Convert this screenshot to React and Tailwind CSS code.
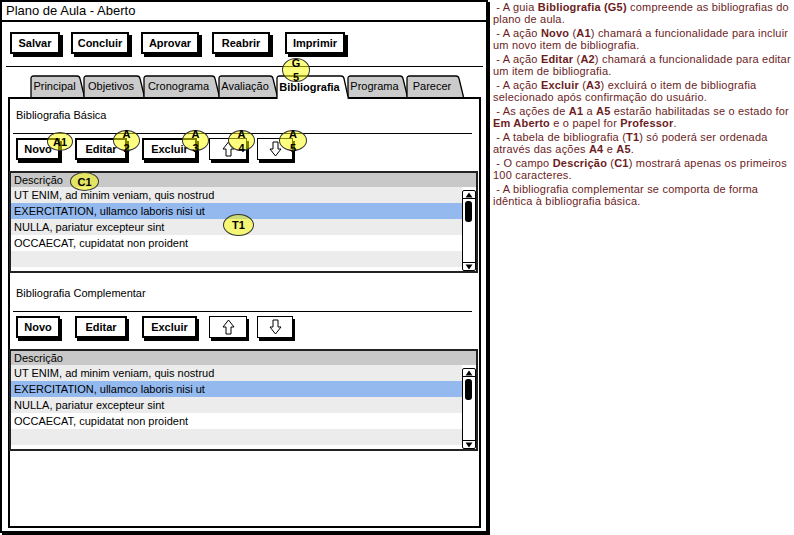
import React from "react"

const rows = [
    "UT ENIM, ad minim veniam, quis nostrud",
    "EXERCITATION, ullamco laboris nisi ut",
    "NULLA, pariatur excepteur sint",
    "OCCAECAT, cupidatat non proident",
    "",
]
const rowBg = ["bg-[#ececec]", "bg-[#93b9ef]", "bg-[#ececec]", "bg-white", "bg-[#ececec]"]

const tabs = [
    { label: "Principal", w: 53 },
    { label: "Objetivos", w: 60 },
    { label: "Cronograma", w: 75 },
    { label: "Avaliação", w: 58 },
    { label: "Bibliografia", w: 71, active: true },
    { label: "Programa", w: 59 },
    { label: "Parecer", w: 56 },
]

const Tab = ({ label, w, active }) => {
    const h = active ? 24 : 22
    const d = `M1,${h} V3.5 Q1,1 3.5,1 H${w - 6} Q${w - 3.5},1 ${w - 3},3.5 L${w + 1.5},${h}`
    return (
        <div className={`relative h-[22px] shrink-0 ${active ? "z-10" : ""}`} style={{ width: w }}>
            <svg className="absolute left-0 top-0 overflow-visible" width={w + 3} height={h}>
                <path d={d} fill={active ? "#fff" : "#cbcbcb"} stroke="#000" strokeWidth="1.3" />
            </svg>
            <div className={`relative flex h-full items-center justify-center pr-[4px] text-[11px] ${active ? "pt-[3px] font-bold" : ""}`}>
                {label}
            </div>
        </div>
    )
}

const Arrow = ({ down }) => (
    <svg width="13" height="16" viewBox="0 0 13 16">
        <path
            d={down ? "M6.5,15 L12,8 H9 V1 H4 V8 H1 Z" : "M6.5,1 L12,8 H9 V15 H4 V8 H1 Z"}
            fill="#fff" stroke="#000" strokeWidth="1" strokeLinejoin="miter" />
    </svg>
)

const Scrollbar = () => (
    <div className="flex h-[81px] w-[14px] flex-col rounded-[2px] border-[1.5px] border-black bg-white">
        <div className="flex h-[8px] items-center justify-center border-b border-black">
            <svg width="8" height="6"><path d="M4,0.5 L7.5,5.5 H0.5 Z" fill="#000" /></svg>
        </div>
        <div className="flex-1 pt-[2px]">
            <div className="ml-[2px] h-[21px] w-[7px] rounded-[3px] bg-black" />
        </div>
        <div className="flex h-[8px] items-center justify-center border-t border-black">
            <svg width="8" height="6"><path d="M4,5.5 L7.5,0.5 H0.5 Z" fill="#000" /></svg>
        </div>
    </div>
)

const Section = ({ title }) => (
    <div className="flex flex-col">
        <div className="h-[12px] pl-[6px] text-[11px] leading-[12px]">{title}</div>
        <div className="ml-[3px] mr-[7px] mt-[12px] border-t-[1.5px] border-black" />
        <div className="mt-[4px] flex pl-[6px]">
            <div className="flex h-[22px] w-[44px] items-center justify-center border-2 border-black bg-white text-[11px] font-bold shadow-[2px_3px_0_#000]">Novo</div>
            <div className="ml-[15px] flex h-[22px] w-[52px] items-center justify-center border-2 border-black bg-white text-[11px] font-bold shadow-[2px_3px_0_#000]">Editar</div>
            <div className="ml-[15px] flex h-[22px] w-[55px] items-center justify-center border-2 border-black bg-white text-[11px] font-bold shadow-[2px_3px_0_#000]">Excluir</div>
            <div className="ml-[12px] flex h-[22px] w-[38px] items-center justify-center border-[1.5px] border-black bg-white shadow-[2px_3px_0_#000]"><Arrow /></div>
            <div className="ml-[10px] flex h-[22px] w-[36px] items-center justify-center border-[1.5px] border-black bg-white shadow-[2px_3px_0_#000]"><Arrow down /></div>
        </div>
        <div className="-ml-[1px] mr-[1px] mt-[11px] flex h-[102px] flex-col border-2 border-[#222]">
            <div className="h-[14px] bg-[#c8c8c8] pl-[3px] text-[11px] leading-[14px]">Descrição</div>
            <div className="flex flex-1">
                <div className="flex-1">
                    {rows.map((r, i) => (
                        <div key={i} className={`h-[16px] pl-[3px] text-[11px] leading-[16px] ${rowBg[i]}`}>{r}</div>
                    ))}
                </div>
                <div className="pt-[3px]">
                    <Scrollbar />
                </div>
            </div>
        </div>
    </div>
)

const Callout = ({ className, children, stack }) => (
    <div className={`absolute z-20 flex items-center justify-center rounded-[50%] border-[1.5px] border-[#333] bg-[#ffff00]/50 text-[11px] font-bold ${stack ? "flex-col leading-[14px]" : "leading-[12px]"} ${className}`}>
        {children}
    </div>
)

const Note = ({ first, second }) => (
    <div className="mb-[2px] whitespace-pre">
        <div>{first}</div>
        <div>{second}</div>
    </div>
)

export default function App() {
    return (
        <div className="flex h-[535px] w-[794px] overflow-hidden bg-white font-['Liberation_Sans',Arial,sans-serif] text-black">
            <div className="relative flex h-[533px] w-[488px] shrink-0 flex-col border-2 border-black shadow-[2px_2px_0_#000]">
                <div className="flex h-[20px] items-center border-b-2 border-black pl-[4px] text-[13px]">Plano de Aula - Aberto</div>

                <div className="flex pl-[8px] pt-[10px]">
                    <div className="flex h-[22px] w-[50px] items-center justify-center border-2 border-black bg-white text-[11px] font-bold shadow-[3px_3px_0_#000]">Salvar</div>
                    <div className="ml-[11px] flex h-[22px] w-[58px] items-center justify-center border-2 border-black bg-white text-[11px] font-bold shadow-[3px_3px_0_#000]">Concluir</div>
                    <div className="ml-[12px] flex h-[22px] w-[58px] items-center justify-center border-2 border-black bg-white text-[11px] font-bold shadow-[3px_3px_0_#000]">Aprovar</div>
                    <div className="ml-[13px] flex h-[22px] w-[58px] items-center justify-center border-2 border-black bg-white text-[11px] font-bold shadow-[3px_3px_0_#000]">Reabrir</div>
                    <div className="ml-[15px] flex h-[22px] w-[60px] items-center justify-center border-2 border-black bg-white text-[11px] font-bold shadow-[3px_3px_0_#000]">Imprimir</div>
                </div>

                <div className="ml-[4px] mr-[3px] mt-[12px] border-t-[1.5px] border-black" />

                <div className="relative z-10 ml-[28px] mt-[8px] flex h-[22px]">
                    {tabs.map((t) => <Tab key={t.label} {...t} />)}
                </div>

                <div className="mb-[3px] ml-[6px] mr-[5px] flex flex-1 flex-col border-2 border-black pt-[10px]">
                    <Section title="Bibliografia Básica" />
                    <div className="h-[14px]" />
                    <Section title="Bibliografia Complementar" />
                </div>

                <Callout className="left-[280px] top-[56px] h-[24px] w-[28px]" stack><span>G</span><span>5</span></Callout>
                <Callout className="left-[45px] top-[130px] h-[19px] w-[26px]">A1</Callout>
                <Callout className="left-[111px] top-[128px] h-[21px] w-[27px]" stack><span>A</span><span>2</span></Callout>
                <Callout className="left-[180px] top-[128px] h-[21px] w-[27px]" stack><span>A</span><span>3</span></Callout>
                <Callout className="left-[226px] top-[128px] h-[21px] w-[27px]" stack><span>A</span><span>4</span></Callout>
                <Callout className="left-[277px] top-[128px] h-[21px] w-[28px]" stack><span>A</span><span>5</span></Callout>
                <Callout className="left-[68px] top-[170px] h-[19px] w-[29px]">C1</Callout>
                <Callout className="left-[221px] top-[212px] h-[22px] w-[31px]">T1</Callout>
            </div>

            <div className="ml-[5px] pt-[0.5px] text-[11px] leading-[12px] tracking-[0.2px] text-[#6b1d1d]">
                <Note first={<> - A guia <b>Bibliografia (G5)</b> compreende as bibliografias do</>} second="plano de aula." />
                <Note first={<> - A ação <b>Novo</b> (<b>A1</b>) chamará a funcionalidade para incluir</>} second="um novo item de bibliografia." />
                <Note first={<> - A ação <b>Editar</b> (<b>A2</b>) chamará a funcionalidade para editar</>} second="um item de bibliografia." />
                <Note first={<> - A ação <b>Excluir</b> (<b>A3</b>) excluirá o item de bibliografia</>} second="selecionado após confirmação do usuário." />
                <Note first={<> - As ações de <b>A1</b> a <b>A5</b> estarão habilitadas se o estado for</>} second={<><b>Em Aberto</b> e o papel for <b>Professor</b>.</>} />
                <Note first={<> - A tabela de bibliografia (<b>T1</b>) só poderá ser ordenada</>} second={<>através das ações <b>A4</b> e <b>A5</b>.</>} />
                <Note first={<> - O campo <b>Descrição</b> (<b>C1</b>) mostrará apenas os primeiros</>} second="100 caracteres." />
                <Note first=" - A bibliografia complementar se comporta de forma" second="idêntica à bibliografia básica." />
            </div>
        </div>
    )
}
